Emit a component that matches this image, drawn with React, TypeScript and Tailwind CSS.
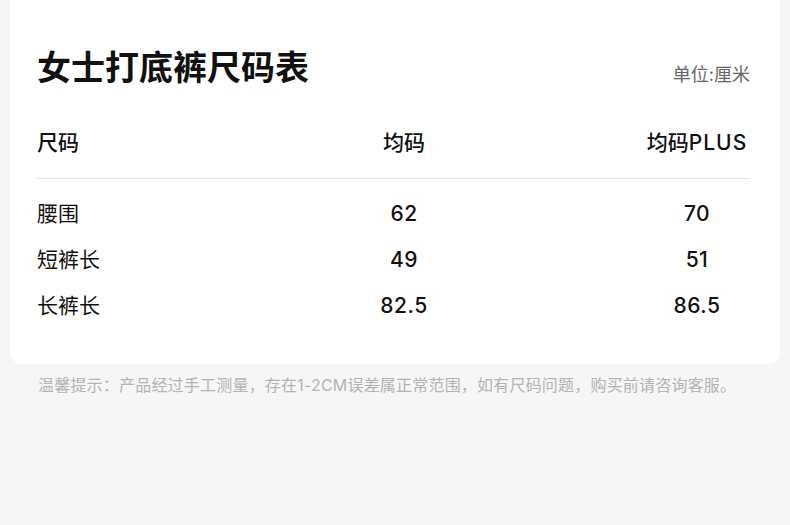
const FONT = "font-['Inter','Noto_Sans_CJK_SC',sans-serif]";

const ROWS = [
  { name: '腰围', std: '62', plus: '70' },
  { name: '短裤长', std: '49', plus: '51' },
  { name: '长裤长', std: '82.5', plus: '86.5' },
];

function Row({ a, b, c }: { a: string; b: string; c: string }) {
  return (
    <div className="flex h-[46px] items-center text-[21px] text-[#111]">
      <div className="w-[307px]">{a}</div>
      <div className="w-[120px] text-center font-medium tracking-[0.5px]">{b}</div>
      <div className="ml-auto w-[106px] text-center font-medium tracking-[0.5px]">{c}</div>
    </div>
  );
}

export default function App() {
  return (
    <div className={`h-[525px] w-[790px] bg-[#f6f6f6] ${FONT}`}>
      <div className="mx-[10px] h-[364px] rounded-b-xl bg-white pl-[27px] pr-[30px] pt-[48px]">
        {/* Title + unit */}
        <div className="flex items-center justify-between">
          <h1 className="h-[40px] text-[34px] font-bold leading-[40px] text-[#111]">女士打底裤尺码表</h1>
          <span className="mt-[12px] text-[18px] text-[#666]">单位:厘米</span>
        </div>

        <div className="mt-[35px]">
          <div className="flex h-[40px] items-center text-[21px] font-medium text-[#111]">
            <div className="w-[307px]">尺码</div>
            <div className="w-[120px] text-center">均码</div>
            <div className="ml-auto w-[106px] whitespace-nowrap text-center">
              均码<span className="tracking-[1px]">PLUS</span>
            </div>
          </div>
        </div>

        <div className="mt-[15px] border-t border-[#e3e3e3]" />

        <div className="mt-[12px]">
          {ROWS.map((r) => (
            <Row key={r.name} a={r.name} b={r.std} c={r.plus} />
          ))}
        </div>
      </div>

      <p className="mt-[9px] pl-[38px] text-[16px] leading-[24px] tracking-[0.2px] text-[#b3b3b3]">
        温馨提示：产品经过手工测量，存在1-2CM误差属正常范围，如有尺码问题，购买前请咨询客服。
      </p>
    </div>
  );
}
